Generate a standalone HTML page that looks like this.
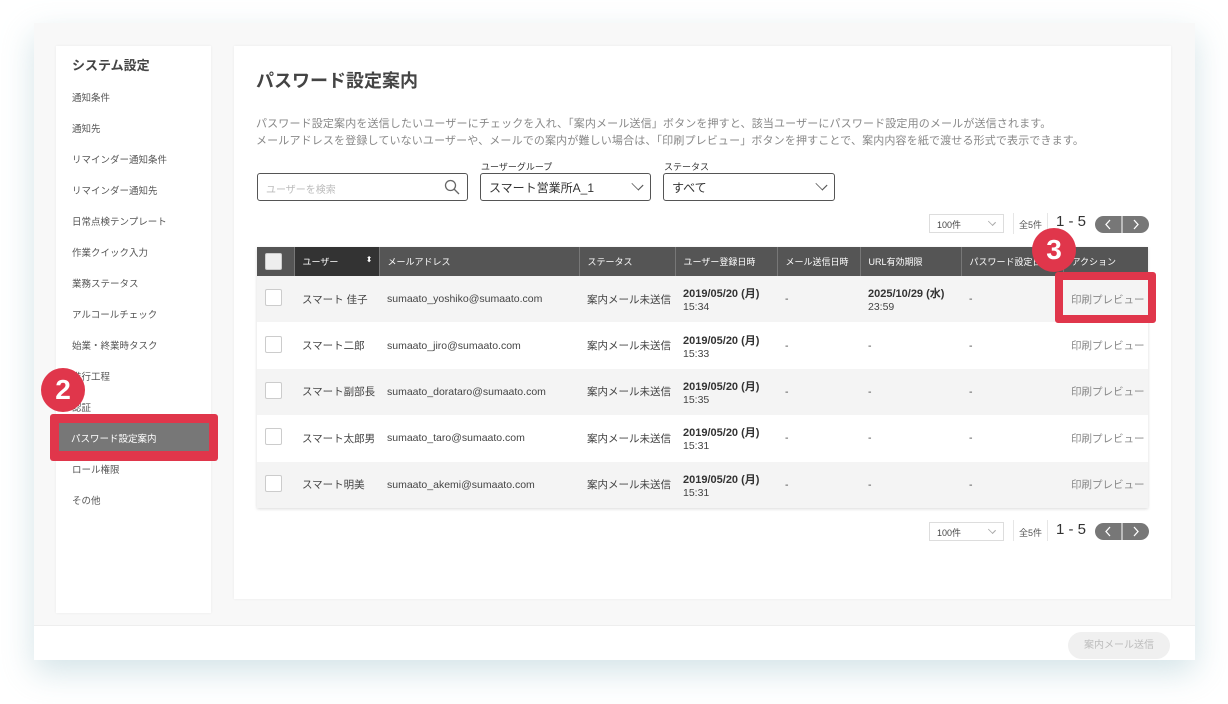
<!DOCTYPE html>
<html><head><meta charset="utf-8"><style>
*{box-sizing:border-box;margin:0;padding:0}
body{width:1228px;height:704px;background:#fff;font-family:"Liberation Sans","Noto Sans CJK JP",sans-serif;color:#444;position:relative;overflow:hidden}
.win{position:absolute;left:34px;top:23px;width:1161px;height:637px;background:#f8f8f8;box-shadow:0 12px 30px rgba(160,195,205,.45)}
.foot{position:absolute;left:34px;top:625px;width:1161px;height:35px;background:#fff;border-top:1px solid #eee}
.side{position:absolute;left:56px;top:46px;width:155px;height:567px;background:#fff;box-shadow:0 0 3px rgba(0,0,0,.06)}
.side h2{position:absolute;left:16px;top:9px;font-size:13px;font-weight:bold;color:#444}
.side .it{position:absolute;left:16px;font-size:9.5px;color:#555}
.main{position:absolute;left:234px;top:46px;width:937px;height:553px;background:#fff;box-shadow:0 0 3px rgba(0,0,0,.06)}
.abs{position:absolute}
.sel{position:absolute;height:28px;border:1.5px solid #555;border-radius:3px;background:#fff;font-size:12px;color:#333;padding:5px 8px}
.chev{position:absolute;right:8px;top:6px;width:9px;height:9px;border-right:1.3px solid #555;border-bottom:1.3px solid #555;transform:rotate(45deg) scale(1.1,.8)}
table{position:absolute;left:257px;top:247px;width:891px;border-collapse:collapse;font-size:10.5px;box-shadow:0 1px 3px rgba(0,0,0,.15)}
th{background:#555;color:#fff;font-weight:normal;font-size:9px;height:29px;text-align:left;padding-left:8px;border-right:1px solid #777}
td{height:46.4px;padding-left:8px;color:#444;font-size:10.5px}
tr:nth-child(even) td{background:#f4f4f4}
tr:nth-child(odd) td{background:#fff}
.cb{display:inline-block;width:17px;height:17px;border:1px solid #ccc;background:#fff;border-radius:2px}
b{font-weight:bold;color:#333;font-size:11px}
.pg{position:absolute;font-size:9px;color:#555}
.pgsel{position:absolute;width:75px;height:19px;border:1px solid #ddd;background:#fff;font-size:9px;padding:3px 7px}
.nav{position:absolute;width:54px;height:17px;background:#777;border-radius:9px}
.badge{position:absolute;width:44px;height:44px;border-radius:50%;background:#e0364b;color:#fff;font-weight:bold;font-size:28px;text-align:center;line-height:44px}
</style></head><body>
<div class="win"></div>
<div class="foot"></div>
<div class="abs" style="left:1068px;top:632px;width:102px;height:27px;border-radius:14px;background:#f0f0f0;color:#bbb;font-size:10px;text-align:center;line-height:27px">案内メール送信</div>
<div class="side">
<h2>システム設定</h2>
<div class="it" style="top:44px">通知条件</div>
<div class="it" style="top:75px">通知先</div>
<div class="it" style="top:106px">リマインダー通知条件</div>
<div class="it" style="top:137px">リマインダー通知先</div>
<div class="it" style="top:168px">日常点検テンプレート</div>
<div class="it" style="top:199px">作業クイック入力</div>
<div class="it" style="top:230px">業務ステータス</div>
<div class="it" style="top:261px">アルコールチェック</div>
<div class="it" style="top:292px">始業・終業時タスク</div>
<div class="it" style="top:323px">進行工程</div>
<div class="it" style="top:354px">認証</div>
<div class="it" style="top:416px">ロール権限</div>
<div class="it" style="top:447px">その他</div>
</div>
<div class="abs" style="left:50px;top:414px;width:168px;height:47px;background:#e0364b;border-radius:3px"></div>
<div class="abs" style="left:59px;top:423px;width:150px;height:28px;background:#777;color:#fff;font-size:9.5px;padding:8px 0 0 12px">パスワード設定案内</div>
<div class="badge" style="left:41px;top:368px">2</div>
<div class="main">
<div class="abs" style="left:22px;top:21px;font-size:18px;font-weight:bold;color:#444">パスワード設定案内</div>
<div class="abs" style="left:22px;top:70px;font-size:11px;color:#888;line-height:17px;white-space:nowrap;letter-spacing:0.15px">パスワード設定案内を送信したいユーザーにチェックを入れ、「案内メール送信」ボタンを押すと、該当ユーザーにパスワード設定用のメールが送信されます。<br>メールアドレスを登録していないユーザーや、メールでの案内が難しい場合は、「印刷プレビュー」ボタンを押すことで、案内内容を紙で渡せる形式で表示できます。</div>
</div>
<div class="sel" style="left:257px;top:173px;width:211px;color:#bbb;font-size:10px;padding-top:7px">ユーザーを検索
<svg style="position:absolute;right:7px;top:5px" width="16" height="16" viewBox="0 0 16 16"><circle cx="6.5" cy="6.5" r="5" fill="none" stroke="#666" stroke-width="1.3"/><path d="M10 10l5 5" stroke="#666" stroke-width="1.3"/></svg></div>
<div class="abs" style="left:481px;top:160px;font-size:9px;color:#333">ユーザーグループ</div>
<div class="sel" style="left:480px;top:173px;width:171px">スマート営業所A_1<span class="chev"></span></div>
<div class="abs" style="left:664px;top:160px;font-size:9px;color:#333">ステータス</div>
<div class="sel" style="left:663px;top:173px;width:172px">すべて<span class="chev"></span></div>

<div class="pgsel" style="left:929px;top:214px">100件<span class="chev" style="width:6px;height:6px;top:4px;border-color:#aaa;border-width:1px"></span></div>
<div class="abs" style="left:1013px;top:213px;width:1px;height:21px;background:#e6e6e6"></div>
<div class="pg" style="left:1019px;top:218px">全5件</div>
<div class="abs" style="left:1047px;top:213px;width:1px;height:21px;background:#e6e6e6"></div>
<div class="abs" style="left:1056px;top:213px;font-size:15px;color:#333">1 - 5</div>
<div class="nav" style="left:1095px;top:216px"><svg width="54" height="17"><path d="M15 4l-4 4.5 4 4.5M39 4l4 4.5-4 4.5" fill="none" stroke="#fff" stroke-width="1.3"/><path d="M27 0v17" stroke="#fff"/></svg></div>

<div class="pgsel" style="left:929px;top:522px">100件<span class="chev" style="width:6px;height:6px;top:4px;border-color:#aaa;border-width:1px"></span></div>
<div class="abs" style="left:1013px;top:520px;width:1px;height:21px;background:#e6e6e6"></div>
<div class="pg" style="left:1019px;top:526px">全5件</div>
<div class="abs" style="left:1047px;top:520px;width:1px;height:21px;background:#e6e6e6"></div>
<div class="abs" style="left:1056px;top:521px;font-size:15px;color:#333">1 - 5</div>
<div class="nav" style="left:1095px;top:523px"><svg width="54" height="17"><path d="M15 4l-4 4.5 4 4.5M39 4l4 4.5-4 4.5" fill="none" stroke="#fff" stroke-width="1.3"/><path d="M27 0v17" stroke="#fff"/></svg></div>

<table>
<tr><th style="width:37px"><span class="cb" style="vertical-align:middle;background:#eee"></span></th><th style="width:85px;background:#333">ユーザー<span style="float:right;margin-right:6px;font-size:8px">⬍</span></th><th style="width:200px">メールアドレス</th><th style="width:96px">ステータス</th><th style="width:102px">ユーザー登録日時</th><th style="width:83px">メール送信日時</th><th style="width:101px">URL有効期限</th><th style="width:102px">パスワード設定日時</th><th style="border:none">アクション</th></tr>
<tr><td><span class="cb"></span></td><td>スマート 佳子</td><td>sumaato_yoshiko@sumaato.com</td><td>案内メール未送信</td><td><b>2019/05/20 (月)</b><br>15:34</td><td>-</td><td><b>2025/10/29 (水)</b><br>23:59</td><td>-</td><td style="color:#888">印刷プレビュー</td></tr>
<tr><td><span class="cb"></span></td><td>スマート二郎</td><td>sumaato_jiro@sumaato.com</td><td>案内メール未送信</td><td><b>2019/05/20 (月)</b><br>15:33</td><td>-</td><td>-</td><td>-</td><td style="color:#888">印刷プレビュー</td></tr>
<tr><td><span class="cb"></span></td><td>スマート副部長</td><td>sumaato_dorataro@sumaato.com</td><td>案内メール未送信</td><td><b>2019/05/20 (月)</b><br>15:35</td><td>-</td><td>-</td><td>-</td><td style="color:#888">印刷プレビュー</td></tr>
<tr><td><span class="cb"></span></td><td>スマート太郎男</td><td>sumaato_taro@sumaato.com</td><td>案内メール未送信</td><td><b>2019/05/20 (月)</b><br>15:31</td><td>-</td><td>-</td><td>-</td><td style="color:#888">印刷プレビュー</td></tr>
<tr><td><span class="cb"></span></td><td>スマート明美</td><td>sumaato_akemi@sumaato.com</td><td>案内メール未送信</td><td><b>2019/05/20 (月)</b><br>15:31</td><td>-</td><td>-</td><td>-</td><td style="color:#888">印刷プレビュー</td></tr>
</table>
<div class="abs" style="left:1055px;top:272px;width:101px;height:51px;border:8px solid #e0364b;border-radius:3px"></div>
<div class="badge" style="left:1032px;top:228px">3</div>
</body></html>
